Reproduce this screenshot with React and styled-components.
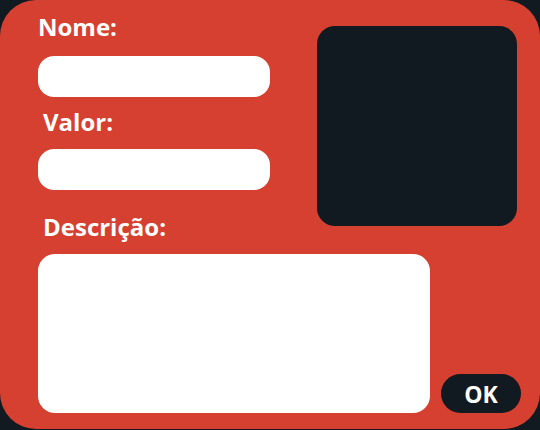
import styled, { createGlobalStyle } from 'styled-components'

const GlobalStyle = createGlobalStyle`
  html, body {
    margin: 0;
    padding: 0;
    background: #111921;
  }
  * {
    box-sizing: border-box;
  }
`

const App = () => {
    return (
        <>
            <GlobalStyle />
            <Card>
                <Label htmlFor="nome">Nome:</Label>
                <Field id="nome" type="text" $top={14} />
                <Label htmlFor="valor" $indent $top={10}>Valor:</Label>
                <Field id="valor" type="text" $top={12} />
                <Label htmlFor="descricao" $indent $top={22}>Descrição:</Label>
                <Preview />
                <Description id="descricao" />
                <OkButton type="button">OK</OkButton>
            </Card>
        </>
    )
}

const Card = styled.form`
width: 540px;
height: 429px;
padding: 12px 0 16px 38px;
background-color: #d64030;
border-radius: 36px;
display: grid;
grid-template-columns: 232px 47px 113px 11px 80px;
grid-template-rows: auto auto auto auto auto 1fr;
font-family: "Open Sans", "Noto Sans", sans-serif;
`

const Label = styled.label`
grid-column: 1 / 3;
display: block;
margin-top: ${props => props.$top || 0}px;
padding-left: ${props => props.$indent ? '5px' : '0'};
color: #fff;
font-size: 24px;
font-weight: 700;
line-height: 30px;
`

const Field = styled.input`
grid-column: 1 / 2;
width: 232px;
height: 41px;
margin-top: ${props => props.$top}px;
border: none;
outline: none;
border-radius: 16px;
background: #fff;
padding: 0 14px;
font-family: inherit;
font-size: 16px;
`

const Preview = styled.div`
grid-column: 3 / 6;
grid-row: 1 / 6;
align-self: start;
width: 200px;
height: 200px;
margin-top: 14px;
border-radius: 18px;
background-color: #111921;
`

const Description = styled.textarea`
grid-column: 1 / 4;
grid-row: 6;
width: 392px;
height: 159px;
margin-top: 12px;
border: none;
outline: none;
resize: none;
border-radius: 17px;
background: #fff;
padding: 12px 14px;
font-family: inherit;
font-size: 16px;
`

const OkButton = styled.button`
grid-column: 5;
grid-row: 6;
align-self: end;
width: 80px;
height: 39px;
border: none;
border-radius: 20px;
background-color: #111921;
color: #fff;
font-family: inherit;
font-size: 23px;
font-weight: 700;
padding: 0;
cursor: pointer;
`

export default App
